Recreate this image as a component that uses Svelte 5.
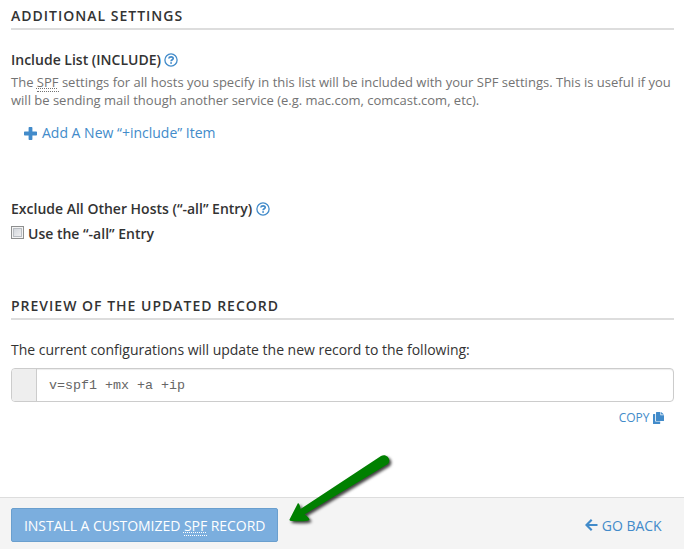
<script>
  let useAll = $state(false);
  const record = 'v=spf1 +mx +a +ip';
</script>

{#snippet help()}
  <svg class="help" width="14" height="14" viewBox="0 0 14 14" aria-hidden="true">
    <circle cx="7" cy="7" r="6.1" fill="none" stroke="currentColor" stroke-width="1.3" />
    <path d="M4.8 5.5C5 4.1 6 3.8 7.1 3.8C8.4 3.8 9.2 4.6 9.2 5.5C9.2 6.9 7.1 6.7 7.1 8.3" fill="none" stroke="currentColor" stroke-width="1.7" />
    <path d="M6.2 9.2H8V10.8H6.2Z" fill="currentColor" />
  </svg>
{/snippet}

<main class="page">
  <section class="content">
    <h2>Additional Settings</h2>

    <div class="label include"><span>Include List (INCLUDE)</span>{@render help()}</div>
    <p class="desc">
      <span class="d1">The <abbr>SPF</abbr> settings for all hosts you specify in this list will be included with your SPF settings. This is useful if you</span><br />
      <span class="d2">will be sending mail though another service (e.g. mac.com, comcast.com, etc).</span>
    </p>
    <a class="add" href="#add">
      <svg width="13" height="13" viewBox="0 0 13 13" aria-hidden="true"><path d="M4.6 0.7Q4.6 0 5.3 0H7.7Q8.4 0 8.4 0.7V4.6H12.3Q13 4.6 13 5.3V7.7Q13 8.4 12.3 8.4H8.4V12.3Q8.4 13 7.7 13H5.3Q4.6 13 4.6 12.3V8.4H.7Q0 8.4 0 7.7V5.3Q0 4.6 .7 4.6H4.6Z" fill="currentColor" /></svg>
      <span>Add A New “+include” Item</span>
    </a>

    <div class="label exclude"><span>Exclude All Other Hosts (“-all” Entry)</span>{@render help()}</div>
    <label class="check">
      <input type="checkbox" bind:checked={useAll} />
      <span>Use the “-all” Entry</span>
    </label>

    <h2 class="preview">Preview of the Updated Record</h2>
    <p class="intro"><span>The current configurations will update the new record to the following:</span></p>
    <div class="record">
      <div class="addon"></div>
      <code>{record}</code>
    </div>
    <a class="copy" href="#copy">
      <span>COPY</span>
      <svg width="11" height="12" viewBox="0 0 11 12" aria-hidden="true">
        <path d="M0 2.6Q0 2 .6 2H2.2V9.6H7.2V11.4Q7.2 12 6.6 12H.6Q0 12 0 11.4Z" fill="currentColor" />
        <path d="M3 .6Q3 0 3.6 0H7.4V3.2H11V8.4Q11 9 10.4 9H3.6Q3 9 3 8.4ZM8.1 0L11 2.5H8.1Z" fill="currentColor" />
      </svg>
    </a>
  </section>

  <footer>
    <button type="button"><span>INSTALL A CUSTOMIZED <abbr>SPF</abbr> RECORD</span></button>
    <a class="back" href="#back">
      <svg width="13" height="12" viewBox="0 0 13 12" aria-hidden="true"><path d="M6.7 .8L1.5 6L6.7 11.2M2 6H12.5" fill="none" stroke="currentColor" stroke-width="2.2" /></svg>
      <span>GO BACK</span>
    </a>
  </footer>

  <svg class="pointer" width="120" height="90" viewBox="280 445 120 90" aria-hidden="true">
    <path d="M289.5 519.5L298 503Q300 504 300.5 509L381 456C386 453 392 459 388 464L304.500 514.5Q309 517 309.500 520Q306 522 292 521Q289 521 289.500 519.500Z" fill="#008000" />
  </svg>
</main>

<style>
  :global(body) {
    margin: 0;
    background: #fff;
  }
  .page {
    position: relative;
    display: flex;
    flex-direction: column;
    width: 684px;
    height: 549px;
    overflow: hidden;
    background: #fff;
    color: #333;
    font: 14px/20px 'Open Sans', sans-serif;
  }
  .content {
    display: flex;
    flex-direction: column;
    height: 497px;
    padding: 0 10px 0 11px;
    box-sizing: border-box;
  }
  h2 {
    margin: 6px 0 0;
    height: 22px;
    border-bottom: 2px solid #ddd;
    font-size: 14px;
    line-height: 20px;
    font-weight: 600;
    letter-spacing: 1px;
    text-transform: uppercase;
    white-space: nowrap;
  }
  a {
    color: #428bca;
    text-decoration: none;
  }
  p {
    margin: 0;
  }
  .label {
    display: flex;
    align-items: center;
    gap: 3.5px;
    height: 20px;
    font-weight: 600;
    white-space: nowrap;
  }
  .help {
    color: #428bca;
  }
  .include {
    margin-top: 20px;
  }
  .desc {
    height: 36px;
    margin-top: 3px;
    color: #737373;
    font-size: 13px;
    line-height: 18px;
    white-space: nowrap;
  }
  .d1 {
    letter-spacing: 0.008px;
  }
  abbr {
    text-decoration: underline dotted 1px;
    text-underline-offset: 1px;
    border-bottom: 1px dotted currentColor;
  }
  .add {
    display: flex;
    align-items: center;
    gap: 5px;
    height: 20px;
    margin: 14px 0 0 13px;
  }
  .exclude {
    margin-top: 56px;
  }
  .check {
    display: flex;
    align-items: center;
    gap: 4px;
    height: 20px;
    margin-top: 5px;
    font-weight: 600;
  }
  input {
    appearance: none;
    width: 13px;
    height: 13px;
    margin: 0 0 3px;
    border: 1px solid #8e8f8f;
    box-shadow: inset 0 0 0 1px #f4f4f4, inset 0 0 0 2px #b9bdc2;
    background: linear-gradient(135deg, #cbcfd5, #f6f6f6);
  }
  .preview {
    margin-top: 52px;
  }
  .intro {
    height: 20px;
    margin-top: 20px;
    letter-spacing: -0.015px;
  }
  .record {
    display: flex;
    height: 34px;
    margin-top: 8px;
    box-sizing: border-box;
    border: 1px solid #ccc;
    border-radius: 4px;
    overflow: hidden;
    box-shadow: inset 0 1px 1px rgba(0, 0, 0, 0.075);
  }
  .addon {
    width: 24px;
    border-right: 1px solid #ccc;
    background: #eee;
  }
  code {
    padding: 1px 0 0 12px;
    color: #666;
    font: 13.333px/32px 'Liberation Mono', monospace;
  }
  .copy {
    display: flex;
    align-self: flex-end;
    align-items: center;
    gap: 3px;
    height: 18px;
    margin: 7px 10.5px 0 0;
    font-size: 12px;
    line-height: 18px;
  }
  footer {
    display: flex;
    align-items: flex-start;
    justify-content: space-between;
    height: 52px;
    padding: 10px 22.5px 0 11px;
    box-sizing: border-box;
    border-top: 1px solid #ddd;
    background: #f4f4f4;
  }
  button {
    width: 267px;
    height: 34px;
    padding: 2px 12px 0;
    border: 1px solid #6a9fce;
    border-radius: 2px;
    background: #7baede;
    color: #fff;
    font: 14px/20px 'Open Sans', sans-serif;
    letter-spacing: -0.045px;
    text-align: left;
    white-space: nowrap;
  }
  .back {
    display: flex;
    align-items: center;
    gap: 4px;
    height: 34px;
    letter-spacing: -0.05px;
  }
  .back span {
    padding-top: 2px;
  }
  .pointer {
    position: absolute;
    left: 280px;
    top: 445px;
    filter: drop-shadow(2px 2px 1.5px rgba(0, 0, 0, 0.75));
  }
</style>
